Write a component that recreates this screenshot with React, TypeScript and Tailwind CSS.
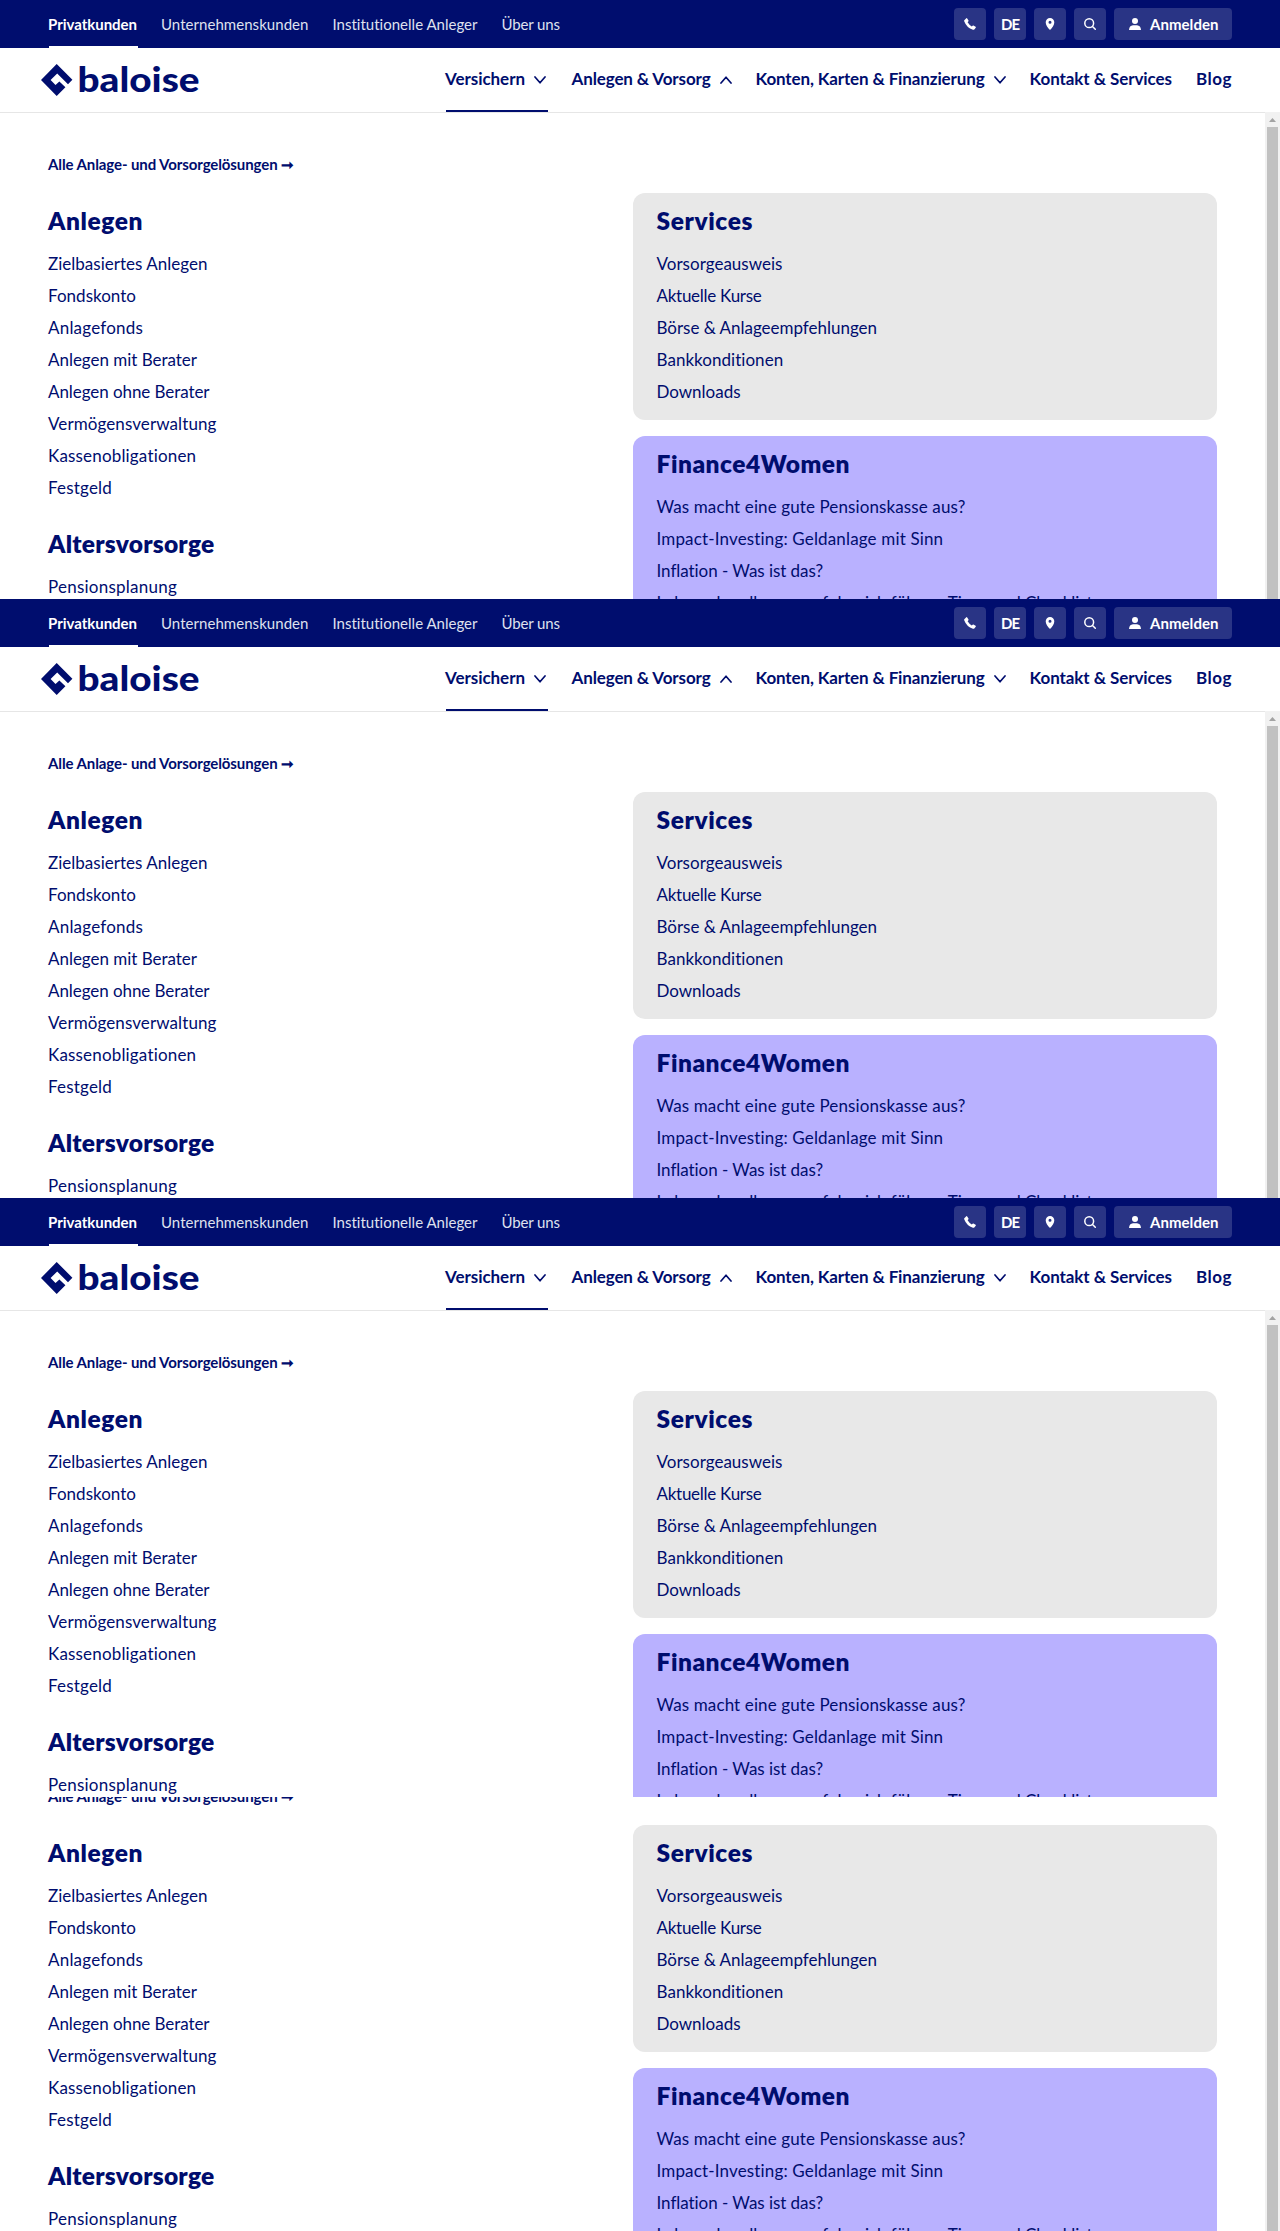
import { useLayoutEffect, useRef, useState } from "react";

type FitProps = { w: number; className?: string; children: string };

/** Text run whose tracking is computed so that it fills a given width. */
function Fit({ w, className = "", children }: FitProps) {
  const ref = useRef<HTMLSpanElement>(null);
  const [gap, setGap] = useState(0);
  useLayoutEffect(() => {
    const el = ref.current;
    if (!el) return;
    el.style.letterSpacing = "0px";
    const natural = el.getBoundingClientRect().width;
    setGap((w - natural) / children.length);
    el.style.letterSpacing = `${(w - natural) / children.length}px`;
  }, [w, children]);
  return (
    <span ref={ref} className={`inline-block whitespace-nowrap ${className}`} style={{ letterSpacing: `${gap}px` }}>
      {children}
    </span>
  );
}

function Chevron({ up = false }: { up?: boolean }) {
  return (
    <svg className="shrink-0 self-center" width="12" height="8" viewBox="0 0 12 8" fill="none" stroke="#000d6e" strokeWidth="1.7" strokeLinecap="round" strokeLinejoin="round">
      <path d={up ? "M1 7 6 1.2 11 7" : "M1 1 6 6.8 11 1"} />
    </svg>
  );
}

function Logo() {
  return (
    <svg width="160" height="32" viewBox="0 0 160 32" fill="#000d6e">
      <path d="M15.7 0 31.4 15.7 27 20.3 16.2 9.6 9.6 16 14.5 21 18.4 17.4 24.4 23.2 15.7 31.9 0 16Z" />
      <text x="36.5" y="27.5" fontFamily="Lato" fontWeight="900" fontSize="35" textLength="122" lengthAdjust="spacingAndGlyphs">baloise</text>
    </svg>
  );
}

function TopBar() {
  const box = "flex h-8 w-8 items-center justify-center rounded bg-[#293485]";
  return (
    <div className="flex h-12 items-center justify-between bg-[#000d6e] pl-12 pr-12 text-[15px] text-white">
      <nav className="flex h-12 gap-6 leading-[48px]">
        <div className="relative font-bold">
          <Fit w={89}>Privatkunden</Fit>
          <span className="absolute bottom-0 left-px h-0.5 w-[89px] bg-white" />
        </div>
        <Fit w={147.5} className="text-[#dfe1ee]">Unternehmenskunden</Fit>
        <Fit w={145.5} className="text-[#dfe1ee]">Institutionelle Anleger</Fit>
        <Fit w={58.5} className="text-[#dfe1ee]">Über uns</Fit>
      </nav>
      <div className="flex gap-2 font-bold">
        <div className={box}>
          <svg width="12" height="12" viewBox="0 0 12 12" fill="white"><path d="M.3 2.3 2.3.3Q2.8-.1 3.2.4L4.5 2.6Q4.7 3 4.3 3.4L3.6 4.2Q5.3 7 7.8 8.4L8.6 7.7Q9 7.3 9.4 7.5L11.6 8.8Q12.1 9.2 11.7 9.7L10.3 11.4Q9.8 12 8.9 11.7 2.7 9.8.2 3.2 0 2.7.3 2.3Z" /></svg>
        </div>
        <div className={box}><Fit w={18}>DE</Fit></div>
        <div className={box}>
          <svg width="10" height="12" viewBox="0 0 10 12" fill="white"><path fillRule="evenodd" d="M5 0A4.3 4.3 0 0 1 9.3 4.3C9.3 7.2 7.5 9.6 5 12 2.5 9.6.7 7.2.7 4.3A4.3 4.3 0 0 1 5 0ZM5 2.8A1.5 1.5 0 1 0 5 5.8 1.5 1.5 0 0 0 5 2.8Z" /></svg>
        </div>
        <div className={box}>
          <svg width="12" height="12" viewBox="0 0 12 12" fill="none" stroke="white" strokeWidth="1.5" strokeLinecap="round"><circle cx="5.2" cy="5.2" r="4.4" /><path d="m8.5 8.5 2.8 2.8" /></svg>
        </div>
        <div className="flex h-8 w-[118px] items-center gap-[9px] rounded bg-[#293485] pl-[15px]">
          <svg width="12" height="12" viewBox="0 0 12 12" fill="white"><circle cx="6" cy="3" r="3" /><path d="M0 12Q.3 7.5 4 7.2H8Q11.7 7.5 12 12Z" /></svg>
          <Fit w={68.5}>Anmelden</Fit>
        </div>
      </div>
    </div>
  );
}

function MainNav() {
  return (
    <div className="flex h-[65px] items-start justify-between border-b border-[#e6e6e6] bg-white pl-[41px] pr-12 text-[#000d6e]">
      <div className="pt-4"><Logo /></div>
      <nav className="flex h-16 gap-6 text-[17px] font-bold leading-[62px]">
        <div className="relative mr-[1.5px] flex h-16 items-start gap-[9px]">
          <Fit w={80}>Versichern</Fit><Chevron />
          <span className="absolute bottom-0 left-px h-0.5 w-[102px] bg-[#000d6e]" />
        </div>
        <div className="flex items-start gap-[9px]"><Fit w={139}>Anlegen &amp; Vorsorg</Fit><Chevron up /></div>
        <div className="flex items-start gap-[9px]"><Fit w={229}>Konten, Karten &amp; Finanzierung</Fit><Chevron /></div>
        <Fit w={142.5}>Kontakt &amp; Services</Fit>
        <Fit w={36}>Blog</Fit>
      </nav>
    </div>
  );
}

type Item = [string, number];

const anlegen: Item[] = [
  ["Zielbasiertes Anlegen", 159.5], ["Fondskonto", 88], ["Anlagefonds", 95], ["Anlegen mit Berater", 149],
  ["Anlegen ohne Berater", 161.5], ["Vermögensverwaltung", 168.5], ["Kassenobligationen", 148.5], ["Festgeld", 64],
];
const services: Item[] = [
  ["Vorsorgeausweis", 126], ["Aktuelle Kurse", 105], ["Börse & Anlageempfehlungen", 220.5], ["Bankkonditionen", 127], ["Downloads", 84],
];
const finance: Item[] = [
  ["Was macht eine gute Pensionskasse aus?", 309], ["Impact-Investing: Geldanlage mit Sinn", 287],
  ["Inflation - Was ist das?", 167], ["Lohnverhandlungen erfolgreich führen: Tipps und Checkliste", 445],
];

function Group({ title, width, items }: { title: string; width: number; items: Item[] }) {
  return (
    <section>
      <h2 className="h-14 text-[24.5px] font-extrabold leading-[55px]"><Fit w={width}>{title}</Fit></h2>
      <ul>
        {items.map(([label, w]) => (
          <li key={label} className="h-8 text-[17px] leading-[29px]"><Fit w={w}>{label}</Fit></li>
        ))}
      </ul>
    </section>
  );
}

function MenuPanel() {
  return (
    <div className="flex h-[486px] overflow-hidden bg-white text-[#000d6e]">
      <div className="w-[1265px] shrink-0 pl-12 pr-12 pt-[38px]">
        <div className="h-[42px] text-[15px] font-bold leading-[27px]"><Fit w={246}>Alle Anlage- und Vorsorgelösungen ➞</Fit></div>
        <div className="grid grid-cols-[585px_584px]">
          <div className="flex flex-col gap-[11px]">
            <Group title="Anlegen" width={95} items={anlegen} />
            <Group title="Altersvorsorge" width={166.5} items={[["Pensionsplanung", 129]]} />
          </div>
          <div className="flex flex-col gap-4">
            <div className="h-[227px] rounded-xl bg-[#e8e8e8] px-[23.5px]"><Group title="Services" width={96.5} items={services} /></div>
            <div className="h-[227px] rounded-xl bg-[#b9b1ff] px-[23.5px]"><Group title="Finance4Women" width={193.5} items={finance} /></div>
          </div>
        </div>
      </div>
    </div>
  );
}

/** One viewport-high view of the opened menu with its scrollbar. */
function Screen() {
  return (
    <div className="relative h-[599px] shrink-0 overflow-hidden bg-white">
      <TopBar />
      <MainNav />
      <MenuPanel />
      <div className="absolute right-0 top-28 flex h-[487px] w-[15px] flex-col items-center bg-[#f1f1f1]">
        <svg className="shrink-0" width="15" height="15" viewBox="0 0 15 15"><path d="M4 10 7.5 6 11 10Z" fill="#a3a3a3" /></svg>
        <div className="w-[11px] flex-1 bg-[#c1c1c1]" />
      </div>
    </div>
  );
}

export default function App() {
  return (
    <main className="flex h-[2231px] w-[1280px] flex-col overflow-hidden bg-white font-['Lato',sans-serif]">
      <Screen />
      <Screen />
      <Screen />
      <div className="flex h-[434px] shrink-0 flex-col justify-end overflow-hidden"><Screen /></div>
    </main>
  );
}
